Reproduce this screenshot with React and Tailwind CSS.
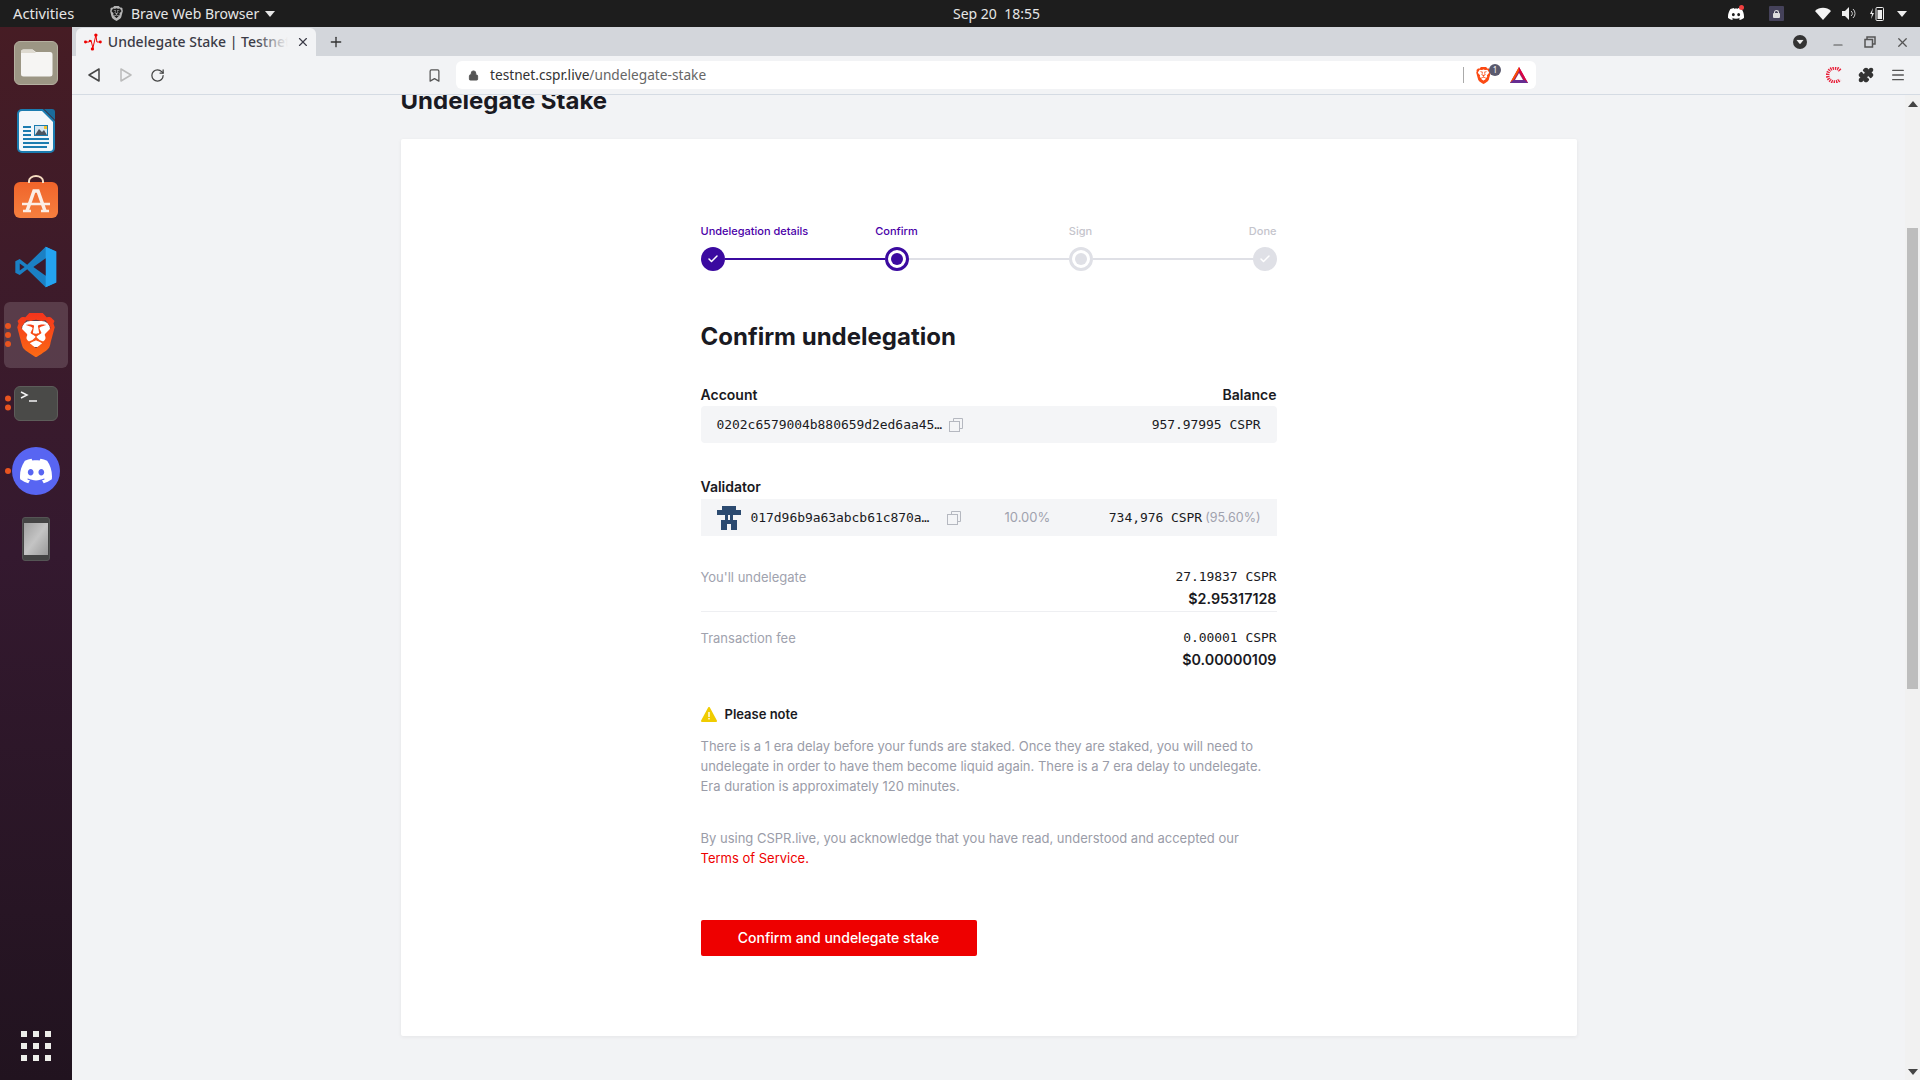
import { Check, Puzzle, Lock, Bookmark, RotateCw, Plus, X, Minus, Menu } from 'lucide-react';
import { SiBrave, SiDiscord } from 'react-icons/si';

const Caret = ({ className }) => (
  <svg width="10" height="6" viewBox="0 0 10 6" className={className}>
    <path d="M0 0h10L5 6z" fill="currentColor" />
  </svg>
);

const FilesIcon = () => (
  <div className="w-11 h-11 rounded-md bg-[#9c9684] border border-[#b5b0a0] flex items-center justify-center">
    <svg width="33" height="28" viewBox="0 0 33 28">
      <path d="M1 3a2.500 2.500 0 0 1 2.500-2.500h9L16 3h14a2.500 2.500 0 0 1 2.500 2.500V25a2.500 2.500 0 0 1-2.500 2.500H3.500A2.500 2.500 0 0 1 1 25z" fill="#f6f5f3" />
      <path d="M1 3a2.500 2.500 0 0 1 2.500-2.500h9L16 4H1z" fill="#dedad0" />
    </svg>
  </div>
);

const WriterIcon = () => (
  <svg width="38" height="44" viewBox="0 0 38 44">
    <path d="M5 0h21l12 12v27a5 5 0 0 1-5 5H5a5 5 0 0 1-5-5V5a5 5 0 0 1 5-5z" fill="#1b7cb0" />
    <path d="M5 2h20l11 11v26a3 3 0 0 1-3 3H5a3 3 0 0 1-3-3V5a3 3 0 0 1 3-3z" fill="#f3f7fa" />
    <path d="M27 0l11 11V3a3 3 0 0 0-3-3z" fill="#1b6c9c" />
    <rect x="6" y="17" width="8" height="2" fill="#1b7cb0" />
    <rect x="6" y="21" width="8" height="2" fill="#1b7cb0" />
    <rect x="6" y="25" width="8" height="2" fill="#1b7cb0" />
    <rect x="6" y="29" width="26" height="2" fill="#1b7cb0" />
    <rect x="6" y="33" width="26" height="2" fill="#1b7cb0" />
    <rect x="6" y="37" width="24" height="2" fill="#1b7cb0" />
    <rect x="17" y="16" width="14" height="11" fill="#1b7cb0" />
    <rect x="18" y="17" width="12" height="9" fill="#d5e6f0" />
    <path d="M18 26l4-6 3 3 2-2 3 5z" fill="#4b5560" />
    <rect x="27" y="17" width="3" height="3" fill="#f0c030" />
  </svg>
);

const StoreIcon = () => (
  <div className="relative w-11 h-9 mt-[1px] rounded-md bg-linear-to-b from-[#f0642a] to-[#f57f3f]">
    <svg width="44" height="44" viewBox="0 0 44 44" className="absolute left-0 -top-[8px]">
      <path d="M15 9V7a7 5 0 0 1 14 0v2" fill="none" stroke="#f5dcc0" strokeWidth="2" />
      <path d="M13 37l7-20h4l7 20" fill="none" stroke="#fbeee6" strokeWidth="3.500" />
      <path d="M8 30h28" stroke="#fbeee6" strokeWidth="2.500" />
      <path d="M9 37h8M27 37h8" stroke="#fbeee6" strokeWidth="2.500" />
    </svg>
  </div>
);

const VsCodeIcon = () => (
  <svg width="44" height="44" viewBox="0 0 100 100">
    <path d="M72 4L96 15v70L72 96 30 55l-17 13-10-5V37l10-5 17 13z" fill="#1b80c4" />
    <path d="M72 4L96 15v70L72 96z" fill="#24a3f0" />
    <path d="M72 30L44 50l28 20z" fill="#3b1a2d" />
    <path d="M13 42l11 8-11 8z" fill="#3b1a2d" />
  </svg>
);

const TerminalIcon = () => (
  <div className="w-11 h-[35px] rounded-md bg-[#4a4a48] border border-[#5d5d5a] px-[5px] pt-[4px]">
    <svg width="18" height="12" viewBox="0 0 18 12">
      <path d="M1 1l6 3-6 3" fill="none" stroke="#f4f4f4" strokeWidth="1.500" />
      <path d="M9 10h8" stroke="#f4f4f4" strokeWidth="1.500" />
    </svg>
  </div>
);

const PhoneIcon = () => (
  <div className="w-7 h-11 rounded-[3px] bg-[#444] border border-[#555] px-[1px] pt-[5px] pb-[5px]">
    <div className="w-full h-full bg-linear-to-br from-[#a0a0a0] via-[#c4c4c4] to-[#9a9a9a]" />
  </div>
);

// white face behind the cut-outs of the lion glyph
const BraveLion = ({ size, gradientId }) => (
  <div className="relative flex items-center justify-center">
    <div className="absolute left-[18%] right-[18%] top-[18%] bottom-[22%] bg-white rounded-[30%]" />
    <svg width="0" height="0" className="absolute">
      <defs>
        <linearGradient id={gradientId} x1="0" y1="0" x2="0" y2="1">
          <stop offset="0" stopColor="#f5341c" />
          <stop offset="1" stopColor="#fb6a14" />
        </linearGradient>
      </defs>
    </svg>
    <SiBrave size={size} fill={`url(#${gradientId})`} className="relative" />
  </div>
);

const Dots = ({ count }) => (
  <div className="absolute left-[5px] top-1/2 -translate-y-1/2 flex flex-col gap-[3px]">
    {Array.from({ length: count }).map((_, i) => (
      <span key={i} className="block w-[6px] h-[6px] rounded-full bg-[#e95420]" />
    ))}
  </div>
);

const DockSlot = ({ dots = 0, active = false, children }) => (
  <div className="relative w-[72px] h-[68px] flex items-center justify-center">
    {active && <div className="absolute left-1 right-1 top-[1px] bottom-[1px] rounded-md bg-[#ffffff26]" />}
    {dots > 0 && <Dots count={dots} />}
    <div className="relative flex items-center justify-center">{children}</div>
  </div>
);

const Dock = () => (
  <aside className="w-[72px] shrink-0 flex flex-col pt-[2px] pb-[19px] bg-linear-to-b from-[#461c24] via-[#34192f] to-[#21131f]">
    <DockSlot><FilesIcon /></DockSlot>
    <DockSlot><WriterIcon /></DockSlot>
    <DockSlot><StoreIcon /></DockSlot>
    <DockSlot><VsCodeIcon /></DockSlot>
    <DockSlot dots={3} active>
      <BraveLion size={44} gradientId="braveDock" />
    </DockSlot>
    <DockSlot dots={2}><TerminalIcon /></DockSlot>
    <DockSlot dots={1}>
      <div className="w-12 h-12 rounded-full bg-[#5865f2] flex items-center justify-center">
        <SiDiscord size={32} className="text-white" />
      </div>
    </DockSlot>
    <DockSlot><PhoneIcon /></DockSlot>
    <div className="mt-auto mx-auto grid grid-cols-3 gap-[6px]">
      {Array.from({ length: 9 }).map((_, i) => (
        <span key={i} className="block w-[6px] h-[6px] bg-[#eeeeea]" />
      ))}
    </div>
  </aside>
);

const TopBar = () => (
  <header className="h-[27px] shrink-0 bg-[#1d1d1d] text-[#e6e6e6] text-[14px] flex items-center font-['Noto_Sans',sans-serif]">
    <span className="ml-[13px] w-[96px] text-[14.700px]">Activities</span>
    <SiBrave size={15} className="text-[#b5b5b5] mr-[7px]" />
    <span>Brave Web Browser</span>
    <Caret className="ml-[6px] text-[#e6e6e6]" />
    <span className="absolute left-[953px] whitespace-pre">Sep 20  18:55</span>
    <div className="ml-auto flex items-center">
      <div className="relative mr-[25px]">
        <SiDiscord size={16} className="text-white" />
        <span className="absolute -top-[1px] right-0 w-[5px] h-[5px] rounded-full bg-[#f04040]" />
      </div>
      <div className="w-[15px] h-[15px] mr-[31px] rounded-[1px] bg-[#45425a] flex flex-col items-center justify-center">
        <div className="w-[5px] h-[3px] rounded-t-full border border-b-0 border-[#dddddd]" />
        <div className="w-[7px] h-[5px] rounded-[1px] bg-[#dddddd]" />
      </div>
      <svg width="16" height="13" viewBox="0 0 16 13" className="mr-[11px]">
        <path d="M0 4a11.500 11.500 0 0 1 16 0L8 13z" fill="#f4f4f4" />
      </svg>
      <svg width="15" height="13" viewBox="0 0 15 13" className="mr-[13px]">
        <path d="M0 4h3l4-4v13l-4-4H0z" fill="#eeeeee" />
        <path d="M9 4a3 3 0 0 1 0 5M11 2a6 6 0 0 1 0 9" fill="none" stroke="#cccccc" />
      </svg>
      <svg width="14" height="15" viewBox="0 0 14 15" className="mr-[13px]">
        <path d="M3 2L0 8h2l-1 5 3-6H2z" fill="#eeeeee" />
        <rect x="6" y="1.500" width="7.500" height="13" rx="1" fill="none" stroke="#eeeeee" />
        <rect x="7.500" y="4" width="4.500" height="9" fill="#eeeeee" />
      </svg>
      <Caret className="mr-[13px] text-[#eeeeee]" />
    </div>
  </header>
);

const Favicon = () => (
  <svg width="18" height="18" viewBox="0 0 18 18">
    <path d="M1 9h4l2-2 2 8 3-13 1 7h4" fill="none" stroke="#ee0000" strokeWidth="1" />
    <circle cx="1.500" cy="9" r="1.500" fill="#ee0000" />
    <circle cx="16.500" cy="9" r="1.500" fill="#ee0000" />
    <circle cx="12" cy="2" r="1.700" fill="#ee0000" />
    <circle cx="8.500" cy="16" r="1.700" fill="#ee0000" />
    <circle cx="6" cy="8" r="1.200" fill="#ee0000" />
  </svg>
);

const TabStrip = () => (
  <div className="h-[29px] shrink-0 bg-[#d3d6db] flex items-end font-['Noto_Sans',sans-serif]">
    <div className="ml-1 w-[240px] h-[28px] bg-[#f2f3f5] rounded-t-md flex items-center pl-2 pr-[6px]">
      <Favicon />
      <div className="relative ml-[6px] w-[182px] -mt-[2px] overflow-hidden whitespace-nowrap text-[14px] font-medium text-[#3b3b47]">
        Undelegate Stake | Testnet
        <div className="absolute right-0 top-0 bottom-0 w-8 bg-linear-to-r from-transparent to-[#f2f3f5]" />
      </div>
      <X size={14} strokeWidth={2} className="ml-[8px] text-[#3b3b47]" />
    </div>
    <div className="h-[28px] ml-[12px] flex items-center">
      <Plus size={16} strokeWidth={2} className="text-[#333]" />
    </div>
    <div className="ml-auto h-[28px] flex items-center text-[#555]">
      <div className="w-[14px] h-[14px] rounded-full bg-[#333] flex items-center justify-center">
        <Caret className="text-[#eee] scale-75" />
      </div>
      <Minus size={14} strokeWidth={2} className="ml-[24px] mt-[6px]" />
      <svg width="12" height="12" viewBox="0 0 12 12" className="ml-[19px]">
        <path d="M3 3V1h8v7H9M1 3.500h7.500v7.500H1z" fill="none" stroke="#555" strokeWidth="1.500" />
      </svg>
      <X size={15} strokeWidth={2} className="ml-[19px] mr-[10px]" />
    </div>
  </div>
);

const BatIcon = () => (
  <svg width="18" height="16" viewBox="0 0 18 16">
    <path d="M9 0L0 16h18z" fill="#9e1f63" />
    <path d="M9 0L0 16l3-2L9 4z" fill="#ff5000" />
    <path d="M9 0l9 16-3-2L9 4z" fill="#e00040" />
    <path d="M9 6l-4 7h8z" fill="#ffffff" />
    <path d="M0 16h18l-3-3H3z" fill="#662d91" />
  </svg>
);

const CasperIcon = () => (
  <svg width="16" height="16" viewBox="0 0 16 16">
    <path d="M14 3.500A7 7 0 1 0 14 12.500" fill="none" stroke="#e8203a" strokeWidth="3.500" strokeDasharray="1.300 0.900" />
  </svg>
);

const Toolbar = () => (
  <div className="h-[39px] shrink-0 bg-[#f2f3f5] border-b border-[#d5dbe3] flex items-center font-['Noto_Sans',sans-serif]">
    <svg width="12" height="14" viewBox="0 0 12 14" className="ml-[16px]">
      <path d="M11 1v12L1 7z" fill="none" stroke="#444" strokeWidth="1.500" strokeLinejoin="round" />
    </svg>
    <svg width="12" height="14" viewBox="0 0 12 14" className="ml-[20px]">
      <path d="M1 1v12l10-6z" fill="none" stroke="#bbb" strokeWidth="1.500" strokeLinejoin="round" />
    </svg>
    <RotateCw size={15} strokeWidth={2} className="ml-[18px] text-[#444]" />
    <Bookmark size={15} strokeWidth={2} className="ml-[262px] text-[#555]" />
    <div className="ml-[14px] w-[1080px] h-[28px] bg-white rounded-md flex items-center pl-[12px] pr-[8px]">
      <Lock size={11} fill="#555" className="text-[#555]" />
      <span className="ml-[11px] text-[13.700px] text-[#333]">testnet.cspr.live<span className="text-[#666]">/undelegate-stake</span></span>
      <div className="ml-auto flex items-center">
        <div className="w-px h-4 bg-[#aaa] mr-[11px]" />
        <div className="relative mr-[18px]">
          <SiBrave size={17} className="text-[#fb4a14]" />
          <span className="absolute -top-[3px] -right-[9px] w-3 h-3 rounded-full bg-[#5a5a6e] text-white text-[8px] leading-3 text-center">1</span>
        </div>
        <BatIcon />
      </div>
    </div>
    <div className="ml-auto flex items-center">
      <CasperIcon />
      <Puzzle size={16} fill="#333" className="ml-[16px] text-[#333]" />
      <Menu size={16} strokeWidth={2} className="ml-[16px] mr-[14px] text-[#555]" />
    </div>
  </div>
);

const Step = ({ label, align, done }) => (
  <div className={`w-6 flex ${align} whitespace-nowrap text-[11px] font-medium ${done ? 'text-[#4a00a8]' : 'text-[#c4c4cc]'}`}>
    {label}
  </div>
);

const Stepper = () => (
  <div>
    <div className="flex justify-between leading-4 pt-[1px]">
      <Step label="Undelegation details" align="justify-start" done />
      <Step label="Confirm" align="justify-center" done />
      <Step label="Sign" align="justify-center" />
      <Step label="Done" align="justify-end" />
    </div>
    <div className="mt-[8px] flex items-center">
      <div className="w-6 h-6 rounded-full bg-[#3b0aa0] flex items-center justify-center">
        <Check size={12} strokeWidth={3} className="text-white" />
      </div>
      <div className="flex-1 h-[2px] bg-[#3b0aa0]" />
      <div className="w-6 h-6 rounded-full border-[3px] border-[#3b0aa0] flex items-center justify-center">
        <div className="w-3 h-3 rounded-full bg-[#3b0aa0]" />
      </div>
      <div className="flex-1 h-[2px] bg-[#dfe0e6]" />
      <div className="w-6 h-6 rounded-full border-[3px] border-[#dfe0e6] flex items-center justify-center">
        <div className="w-3 h-3 rounded-full bg-[#dfe0e6]" />
      </div>
      <div className="flex-1 h-[2px] bg-[#dfe0e6]" />
      <div className="w-6 h-6 rounded-full bg-[#dfe0e6] flex items-center justify-center">
        <Check size={12} strokeWidth={3} className="text-white" />
      </div>
    </div>
  </div>
);

const CopyGlyph = ({ className }) => (
  <svg width="14" height="14" viewBox="0 0 14 14" className={className}>
    <path d="M4.500 3V.500h9v10H11" fill="none" stroke="#b5b8c0" />
    <rect x=".500" y="3.500" width="10" height="10" fill="#f4f5f7" stroke="#b5b8c0" />
  </svg>
);

const Avatar = () => (
  <svg width="24" height="24" viewBox="0 0 24 24" fill="#2b4a70">
    <rect x="5" y="0" width="14" height="4" />
    <rect x="0" y="4" width="24" height="5" />
    <rect x="8" y="9" width="3" height="5" />
    <rect x="13" y="9" width="3" height="5" />
    <rect x="4" y="14" width="16" height="4" />
    <rect x="4" y="18" width="6" height="6" />
    <rect x="14" y="18" width="6" height="6" />
  </svg>
);

const Amount = ({ label, cspr, usd, divider }) => (
  <div className={`flex justify-between pb-[2px] ${divider ? 'border-b border-[#eeeff2]' : ''}`}>
    <span className="text-[13px] text-[#a0a2ae] leading-5">{label}</span>
    <div className="text-right">
      <div className="font-['DejaVu_Sans_Mono',monospace] text-[13px] tracking-[-0.05px] leading-5 text-[#1a1a22]">{cspr}</div>
      <div className="text-[14.300px] font-semibold leading-5 mt-[2px] text-[#1a1a22]">{usd}</div>
    </div>
  </div>
);

const ConfirmCard = () => (
  <section className="bg-white shadow-[0_1px_4px_#0000000f] rounded-[2px] h-[897px] pt-[83px]">
    <div className="w-[576px] mx-auto">
      <Stepper />
      <h2 className="mt-[50px] text-[24px] leading-8 font-bold text-[#1a1a22]">Confirm undelegation</h2>

      <div className="mt-[32px] flex justify-between text-[14px] font-semibold leading-5 text-[#1a1a22]">
        <span>Account</span>
        <span>Balance</span>
      </div>
      <div className="mt-[1px] h-[37px] bg-[#f4f5f7] rounded-[4px] px-4 flex items-center justify-between font-['DejaVu_Sans_Mono',monospace] text-[13px] tracking-[-0.05px] text-[#1a1a22]">
        <div className="flex items-center">
          <span className="w-[228px] whitespace-nowrap">0202c6579004b880659d2ed6aa45…</span>
          <CopyGlyph className="ml-[4px]" />
        </div>
        <span>957.97995 CSPR</span>
      </div>

      <div className="mt-[34px] text-[14px] font-semibold leading-5 text-[#1a1a22]">Validator</div>
      <div className="mt-[2px] h-[37px] bg-[#f4f5f7] px-4 flex items-center font-['DejaVu_Sans_Mono',monospace] text-[13px] text-[#1a1a22]">
        <Avatar />
        <span className="ml-[10px] w-[181px] whitespace-nowrap tracking-[-0.05px]">017d96b9a63abcb61c870a…</span>
        <CopyGlyph className="ml-[15px]" />
        <span className="ml-[44px] font-['Inter',sans-serif] text-[#a0a2ae]">10.00%</span>
        <span className="ml-auto tracking-[-0.05px]">734,976 CSPR</span>
        <span className="ml-[3px] mt-[1px] font-['Inter',sans-serif] text-[12.500px] text-[#a0a2ae]">(95.60%)</span>
      </div>

      <div className="mt-[31px]">
        <Amount label="You'll undelegate" cspr="27.19837 CSPR" usd="$2.95317128" divider />
      </div>
      <div className="mt-[16px]">
        <Amount label="Transaction fee" cspr="0.00001 CSPR" usd="$0.00000109" />
      </div>

      <div className="mt-[32px] flex items-center gap-[8px]">
        <svg width="16" height="15" viewBox="0 0 16 15">
          <path d="M8 1l7 13H1z" fill="#f0cc00" stroke="#f0cc00" strokeWidth="2" strokeLinejoin="round" />
          <rect x="7.300" y="5" width="1.400" height="5" fill="#fff" />
          <rect x="7.300" y="11" width="1.400" height="1.400" fill="#fff" />
        </svg>
        <span className="text-[13px] font-semibold leading-5 text-[#1a1a22]">Please note</span>
      </div>
      <p className="mt-[12px] text-[13px] leading-5 text-[#9a9ca8]">
        There is a 1 era delay before your funds are staked. Once they are staked, you will need to undelegate in order to have them become liquid again. There is a 7 era delay to undelegate. Era duration is approximately 120 minutes.
      </p>
      <p className="mt-[32px] text-[13px] leading-5 text-[#9a9ca8]">
        By using CSPR.live, you acknowledge that you have read, understood and accepted our <span className="text-[#ee0000]">Terms of Service.</span>
      </p>
      <button className="mt-[52px] w-[276px] h-[36px] pb-[2px] bg-[#ee0000] rounded-[2px] text-white text-[14px] font-medium">
        Confirm and undelegate stake
      </button>
    </div>
  </section>
);

const Scrollbar = () => (
  <div className="w-[15px] shrink-0 bg-[#f1f1f1] flex flex-col items-center">
    <Caret className="mt-[6px] rotate-180 text-[#444]" />
    <div className="mt-[121px] w-[11px] h-[461px] bg-[#bdbdbd]" />
    <Caret className="mt-auto mb-[5px] text-[#444]" />
  </div>
);

export default function App() {
  return (
    <div className="relative h-screen w-screen overflow-hidden flex flex-col font-['Inter',sans-serif]">
      <TopBar />
      <div className="flex flex-1 min-h-0">
        <Dock />
        <div className="flex-1 min-w-0 flex flex-col">
          <TabStrip />
          <Toolbar />
          <div className="flex-1 min-h-0 flex bg-[#f2f3f5]">
            <main className="flex-1 min-w-0 overflow-hidden">
              <div className="w-[1176px] mx-auto">
                <h1 className="-mt-[10px] mb-[22px] text-[24px] leading-8 font-bold text-[#1a1a22]">Undelegate Stake</h1>
                <ConfirmCard />
              </div>
            </main>
            <Scrollbar />
          </div>
        </div>
      </div>
    </div>
  );
}
